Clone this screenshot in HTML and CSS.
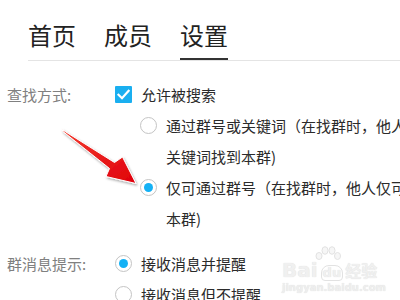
FILE: index.html
```html
<!DOCTYPE html>
<html lang="zh">
<head>
<meta charset="utf-8">
<link rel="stylesheet" href="styles.css">
</head>
<body>
<div class="page">
  <nav class="tabs">
    <span class="tab">首页</span>
    <span class="tab">成员</span>
    <span class="tab active">设置</span>
  </nav>

  <section class="group first">
    <div class="label">查找方式:</div>
    <div class="fields">
      <div class="line"><span class="checkbox"><svg viewBox="0 0 17 17" width="17" height="17"><path d="M3.5 8.8 L7 12.2 L13.6 4.8" fill="none" stroke="#fff" stroke-width="2.2" stroke-linecap="square"/></svg></span><span class="text">允许被搜索</span></div>
      <div class="sub">
        <div class="line opt"><span class="radio"></span><span class="text">通过群号或关键词（在找群时，他人可通过群号或<br>关键词找到本群)</span></div>
        <div class="line opt"><span class="radio on"></span><span class="text">仅可通过群号（在找群时，他人仅可通过群号找到<br>本群)</span></div>
      </div>
    </div>
  </section>

  <section class="group second">
    <div class="label">群消息提示:</div>
    <div class="fields">
      <div class="line"><span class="radio on"></span><span class="text">接收消息并提醒</span></div>
      <div class="line"><span class="radio"></span><span class="text">接收消息但不提醒</span></div>
    </div>
  </section>
</div>

<svg class="arrow" width="400" height="300" viewBox="0 0 400 300">
  <defs>
    <linearGradient id="rg" x1="0" y1="0" x2="1" y2="1">
      <stop offset="0" stop-color="#f23a2e"/>
      <stop offset="1" stop-color="#e0000a"/>
    </linearGradient>
    <filter id="sh" x="-20%" y="-20%" width="140%" height="140%">
      <feDropShadow dx="1" dy="1.5" stdDeviation="1.2" flood-color="#000" flood-opacity="0.35"/>
    </filter>
  </defs>
  <polygon points="62,129.5 63,131.5 109.5,168.5 106,176.5 136,183.5 122.5,157 114.5,162.5" fill="url(#rg)" stroke="#fff" stroke-width="1" stroke-linejoin="round" filter="url(#sh)"/>
</svg>

<div class="watermark">
  <svg class="paw" width="26" height="14" viewBox="0 0 26 14">
    <g fill="#f6f6f6" stroke="#e2e2e2" stroke-width="1">
      <ellipse cx="4" cy="10" rx="3" ry="3.5"/>
      <ellipse cx="10" cy="4.5" rx="3" ry="3.8"/>
      <ellipse cx="17" cy="4.5" rx="3" ry="3.8"/>
      <ellipse cx="22.5" cy="10" rx="3" ry="3.5"/>
    </g>
  </svg>
  <div class="wm-top"><span class="bai">Bai</span><span class="du">du</span><span class="jy">经验</span></div>
  <div class="wm-url">jingyan.baidu.com</div>
</div>
</body>
</html>
```

FILE: styles.css
```css
html, body {
  margin: 0;
  padding: 0;
  overflow: hidden;
  background: #fff;
}

body {
  width: 400px;
  height: 300px;
  font-family: "Noto Sans CJK SC", "Microsoft YaHei", sans-serif;
  color: #2b2b2b;
  position: relative;
}

.page {
  display: flex;
  flex-direction: column;
}

.tabs {
  display: flex;
  gap: 28px;
  margin: 18px 0 0 28px;
  border-bottom: 1px solid #e4e4e4;
}

.tab {
  font-size: 24px;
  line-height: 34px;
  padding-bottom: 6px;
  color: #222;
  border-bottom: 2px solid transparent;
}

.tab.active {
  border-bottom-color: #333;
}

.group {
  display: flex;
  padding-left: 7px;
}

.group.first {
  margin-top: 18px;
}

.group.second {
  margin-top: 14px;
}

.label {
  width: 108px;
  flex: none;
  font-size: 15px;
  line-height: 31px;
  color: #808080;
}

.fields {
  display: flex;
  flex-direction: column;
}

.sub {
  padding-left: 25px;
  display: flex;
  flex-direction: column;
}

.line {
  display: flex;
  align-items: flex-start;
  gap: 9px;
  font-size: 15px;
  line-height: 31px;
  white-space: nowrap;
}

.text {
  color: #2b2b2b;
}

.checkbox {
  width: 17px;
  height: 17px;
  margin-top: 7px;
  background: #1aaff0;
  border-radius: 1px;
  flex: none;
  display: block;
}

.checkbox svg {
  display: block;
}

.radio {
  width: 15px;
  height: 15px;
  margin-top: 7px;
  border: 1px solid #c4c4c4;
  border-radius: 50%;
  flex: none;
  position: relative;
  background: #fff;
}

.radio.on::after {
  content: "";
  position: absolute;
  left: 3px;
  top: 3px;
  width: 9px;
  height: 9px;
  border-radius: 50%;
  background: #14b1f5;
}

.arrow {
  position: absolute;
  left: 0;
  top: 0;
  pointer-events: none;
}

.watermark {
  position: absolute;
  left: 282px;
  top: 246px;
  color: #f0f0f0;
  pointer-events: none;
}

.paw {
  display: block;
  margin-left: 33px;
}

.wm-top {
  display: flex;
  align-items: baseline;
  font-family: "DejaVu Sans", sans-serif;
  font-weight: bold;
  font-size: 20px;
  line-height: 20px;
  text-shadow: 0 0 1px #d8d8d8;
}

.du {
  font-size: 13px;
  margin-left: 3px;
  border: 1px solid #e2e2e2;
  border-radius: 8px 8px 4px 4px;
  padding: 0 1px;
  line-height: 14px;
}

.jy {
  font-family: "Noto Sans CJK SC", sans-serif;
  font-size: 16px;
  margin-left: 2px;
}

.wm-url {
  font-family: "DejaVu Sans", sans-serif;
  font-weight: bold;
  font-size: 10px;
  line-height: 14px;
  color: #eeeeee;
  text-shadow: 0 0 1px #dadada;
}
```
